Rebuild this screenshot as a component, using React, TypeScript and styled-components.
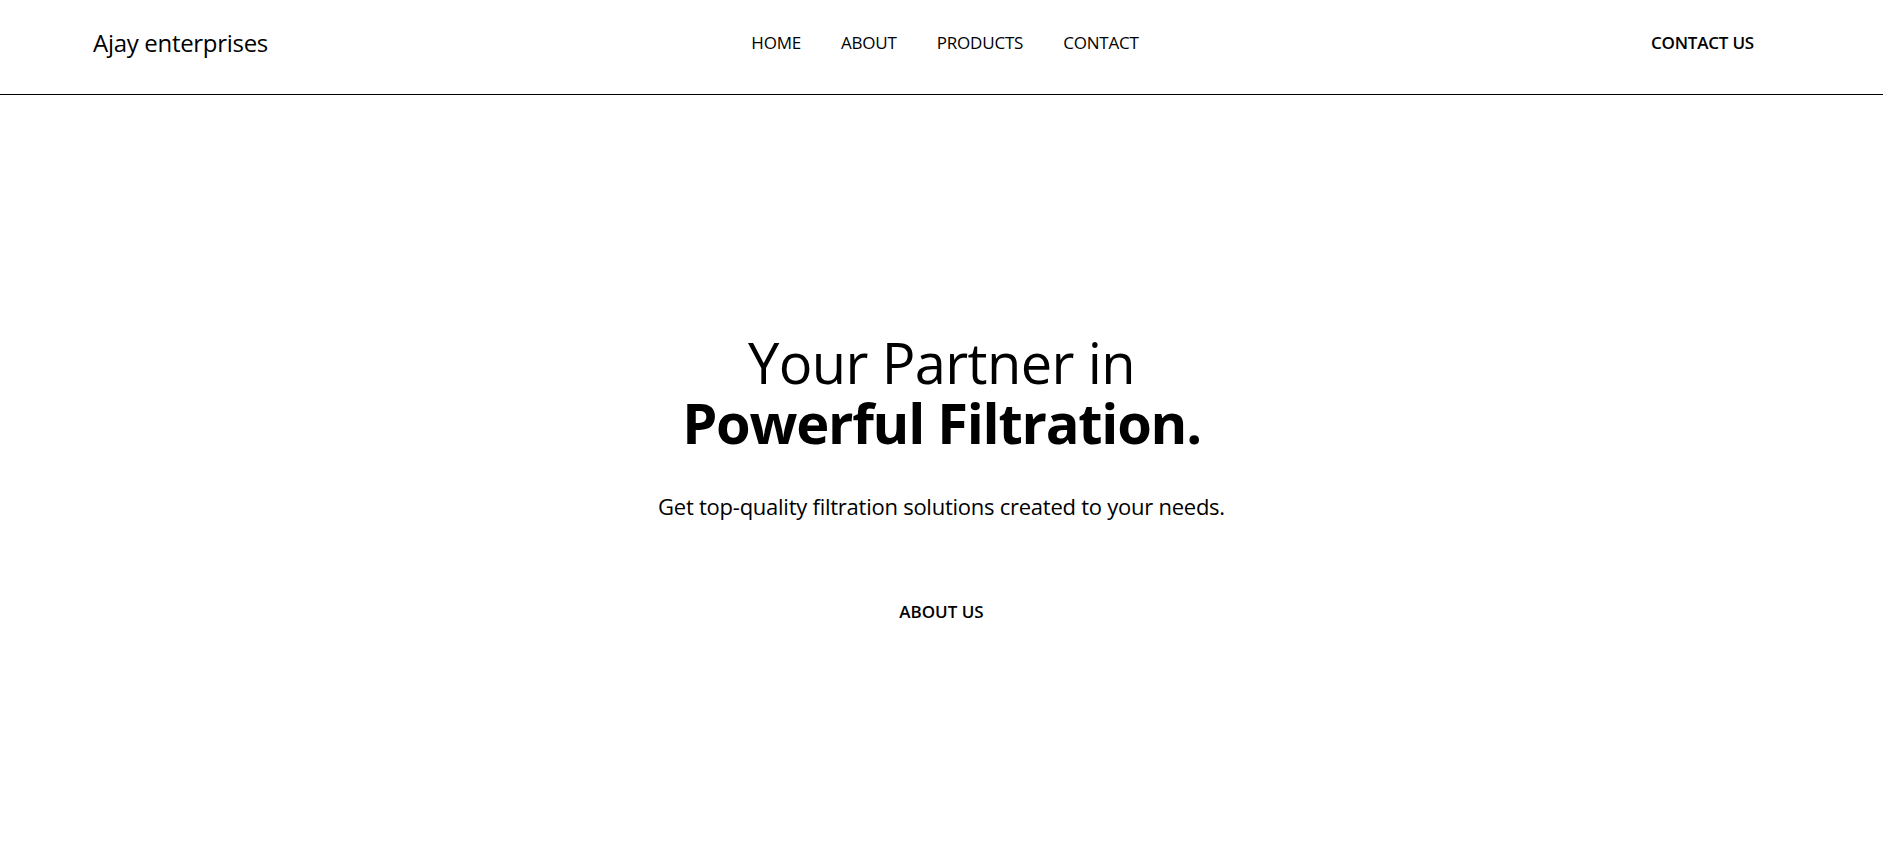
import React from "react";
import styled, { createGlobalStyle } from "styled-components";

const GlobalStyle = createGlobalStyle`
  html, body {
    margin: 0;
    padding: 0;
    background: #ffffff;
  }
  body {
    font-family: "Open Sans", "Noto Sans", "Liberation Sans", sans-serif;
    color: #000000;
  }
  * { box-sizing: border-box; }
`;

const Page = styled.div`
  min-height: 842px;
  display: flex;
  flex-direction: column;
`;

const Header = styled.header`
  height: 95px;
  display: grid;
  grid-template-columns: 1fr auto 1fr;
  align-items: center;
  padding: 0 93px 10px;
  border-bottom: 1px solid #000000;
`;

const Logo = styled.a`
  justify-self: start;
  font-size: 24px;
  font-weight: 400;
  color: #000;
  text-decoration: none;
  letter-spacing: -0.3px;
`;

const Nav = styled.nav`
  display: flex;
  align-items: center;
  gap: 40px;
  padding-left: 7px;
`;

const NavLink = styled.a`
  font-size: 17px;
  font-weight: 400;
  color: #000;
  text-decoration: none;
  letter-spacing: -0.2px;
`;

const HeaderButton = styled.a`
  justify-self: end;
  padding: 0 36px;
  font-size: 17px;
  font-weight: 600;
  color: #000;
  text-decoration: none;
  letter-spacing: -0.2px;
`;

const Hero = styled.section`
  display: flex;
  flex-direction: column;
  align-items: center;
  text-align: center;
  padding-top: 237px;
`;

const Title = styled.h1`
  margin: 0;
  font-size: 56px;
  line-height: 60px;
  font-weight: 400;
  letter-spacing: -0.6px;
`;

const TitleStrong = styled.strong`
  display: block;
  font-weight: 700;
  letter-spacing: -1.25px;
`;

const Subtitle = styled.p`
  margin: 39px 0 0;
  font-size: 22px;
  line-height: 30px;
  font-weight: 400;
  letter-spacing: -0.25px;
`;

const HeroButton = styled.a`
  margin-top: 79px;
  font-size: 17px;
  font-weight: 600;
  color: #000;
  text-decoration: none;
  letter-spacing: 0px;
`;

export default function App() {
  return (
    <Page>
      <GlobalStyle />
      <Header>
        <Logo href="#">Ajay enterprises</Logo>
        <Nav>
          <NavLink href="#">HOME</NavLink>
          <NavLink href="#">ABOUT</NavLink>
          <NavLink href="#">PRODUCTS</NavLink>
          <NavLink href="#">CONTACT</NavLink>
        </Nav>
        <HeaderButton href="#">CONTACT US</HeaderButton>
      </Header>
      <Hero>
        <Title>
          Your Partner in
          <TitleStrong>Powerful Filtration.</TitleStrong>
        </Title>
        <Subtitle>Get top-quality filtration solutions created to your needs.</Subtitle>
        <HeroButton href="#">ABOUT US</HeroButton>
      </Hero>
    </Page>
  );
}
